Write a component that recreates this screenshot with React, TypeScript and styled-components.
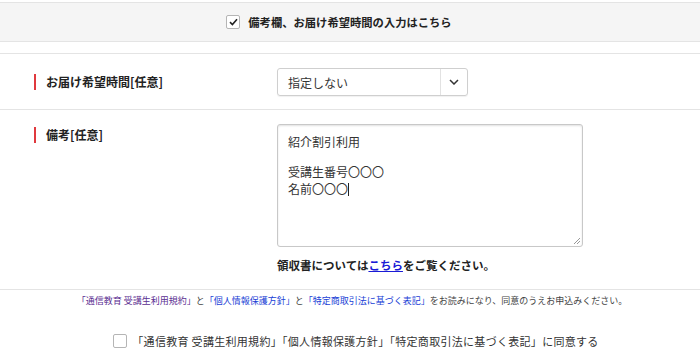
import React from "react";
import styled, { createGlobalStyle } from "styled-components";

const GlobalStyle = createGlobalStyle`
  body {
    margin: 0;
    background: #fff;
    color: #333;
    font-family: "Noto Sans CJK JP", "Noto Sans", sans-serif;
  }
`;

const Page = styled.div`
  width: 700px;
  height: 350px;
  overflow: hidden;
  padding-top: 2px;
  box-sizing: border-box;
`;

const ToggleBand = styled.label`
  display: flex;
  align-items: center;
  justify-content: center;
  gap: 8px;
  height: 38px;
  padding-right: 22px;
  background: #f5f5f5;
  border-top: 1px solid #e4e4e4;
  border-bottom: 1px solid #e4e4e4;
  font-size: 11.3px;
  font-weight: 700;
  color: #222;
`;

const Box = styled.span`
  display: inline-flex;
  align-items: center;
  justify-content: center;
  width: 12px;
  height: 12px;
  border: 1px solid #b5b5b5;
  border-radius: 2px;
  background: #fff;
  flex-shrink: 0;
`;

const Form = styled.div`
  margin-top: 11px;
  border-top: 1px solid #e4e4e4;
`;

const Row = styled.div<{ top?: boolean }>`
  display: flex;
  align-items: ${(p) => (p.top ? "flex-start" : "center")};
  padding: 14px 0 ${(p) => (p.top ? "16px" : "13px")};
  border-bottom: 1px solid #e4e4e4;
`;

const Label = styled.div<{ offset?: number }>`
  width: 219px;
  margin-left: 34px;
  margin-top: ${(p) => p.offset ?? 0}px;
  margin-right: 12px;
  padding-left: 10px;
  border-left: 2px solid #e0393e;
  line-height: 16px;
  font-size: 12px;
  font-weight: 700;
  color: #222;
`;

const Field = styled.div`
  display: flex;
  flex-direction: column;
`;

const Select = styled.div`
  display: flex;
  width: 189px;
  height: 26px;
  border: 1px solid #cfcfcf;
  border-radius: 3px;
  box-shadow: 0 1px 1px rgba(0, 0, 0, 0.06);
  font-size: 12px;
  color: #333;
`;

const SelectValue = styled.div`
  flex: 1;
  display: flex;
  align-items: center;
  padding-left: 10px;
`;

const SelectArrow = styled.div`
  width: 26px;
  display: flex;
  align-items: center;
  justify-content: center;
  border-left: 1px solid #e2e2e2;
`;

const TextArea = styled.div`
  position: relative;
  width: 284px;
  height: 103px;
  padding: 8px 10px 10px;
  border: 1px solid #c8c8c8;
  border-radius: 3px;
  box-shadow: inset 0 1px 2px rgba(0, 0, 0, 0.12);
  font-size: 12px;
  line-height: 17px;
  color: #333;
`;

const Line = styled.div<{ blank?: boolean }>`
  height: ${(p) => (p.blank ? "13px" : "17px")};
`;

const Caret = styled.span`
  display: inline-block;
  width: 1px;
  height: 13px;
  background: #222;
  vertical-align: -2px;
`;

const Grip = styled.svg`
  position: absolute;
  right: 1px;
  bottom: 1px;
`;

const Note = styled.div`
  margin-top: 10px;
  font-size: 11.5px;
  font-weight: 700;
  color: #222;
`;

const Link = styled.a<{ visited?: boolean }>`
  color: ${(p) => (p.visited ? "#5b2e91" : "#1a3fd6")};
  text-decoration: none;
`;

const UnderLink = styled.a`
  color: #1a1ad6;
  text-decoration: underline;
`;

const Terms = styled.div`
  margin-top: 4px;
  text-align: center;
  font-size: 9px;
  color: #444;
  padding-left: 4px;
`;

const Agree = styled.label`
  display: flex;
  align-items: center;
  justify-content: center;
  gap: 5px;
  margin-top: 26px;
  padding-left: 12px;
  font-size: 11px;
  letter-spacing: 0.3px;
  color: #333;
`;

export default function App() {
  return (
    <Page>
      <GlobalStyle />
      <ToggleBand>
        <Box>
          <svg width="9" height="8" viewBox="0 0 9 8">
            <path d="M1 4.2 L3.4 6.5 L8 1.2" fill="none" stroke="#222" strokeWidth="1.6" />
          </svg>
        </Box>
        備考欄、お届け希望時間の入力はこちら
      </ToggleBand>
      <Form>
        <Row>
          <Label>お届け希望時間[任意]</Label>
          <Select>
            <SelectValue>指定しない</SelectValue>
            <SelectArrow>
              <svg width="10" height="6" viewBox="0 0 10 6">
                <path d="M1 1 L5 5 L9 1" fill="none" stroke="#333" strokeWidth="1.5" />
              </svg>
            </SelectArrow>
          </Select>
        </Row>
        <Row top>
          <Label offset={3}>備考[任意]</Label>
          <Field>
            <TextArea>
              <Line>紹介割引利用</Line>
              <Line blank />
              <Line>受講生番号〇〇〇</Line>
              <Line>
                名前〇〇〇
                <Caret />
              </Line>
              <Grip width="8" height="8" viewBox="0 0 8 8">
                <path d="M7 1 L1 7 M7 4 L4 7" stroke="#999" strokeWidth="1" />
              </Grip>
            </TextArea>
            <Note>
              領収書については<UnderLink href="#">こちら</UnderLink>をご覧ください。
            </Note>
          </Field>
        </Row>
      </Form>
      <Terms>
        <Link visited href="#">「通信教育 受講生利用規約」</Link>と
        <Link href="#">「個人情報保護方針」</Link>と
        <Link href="#">「特定商取引法に基づく表記」</Link>をお読みになり、同意のうえお申込みください。
      </Terms>
      <Agree>
        <Box />
        「通信教育 受講生利用規約」「個人情報保護方針」「特定商取引法に基づく表記」に同意する
      </Agree>
    </Page>
  );
}
